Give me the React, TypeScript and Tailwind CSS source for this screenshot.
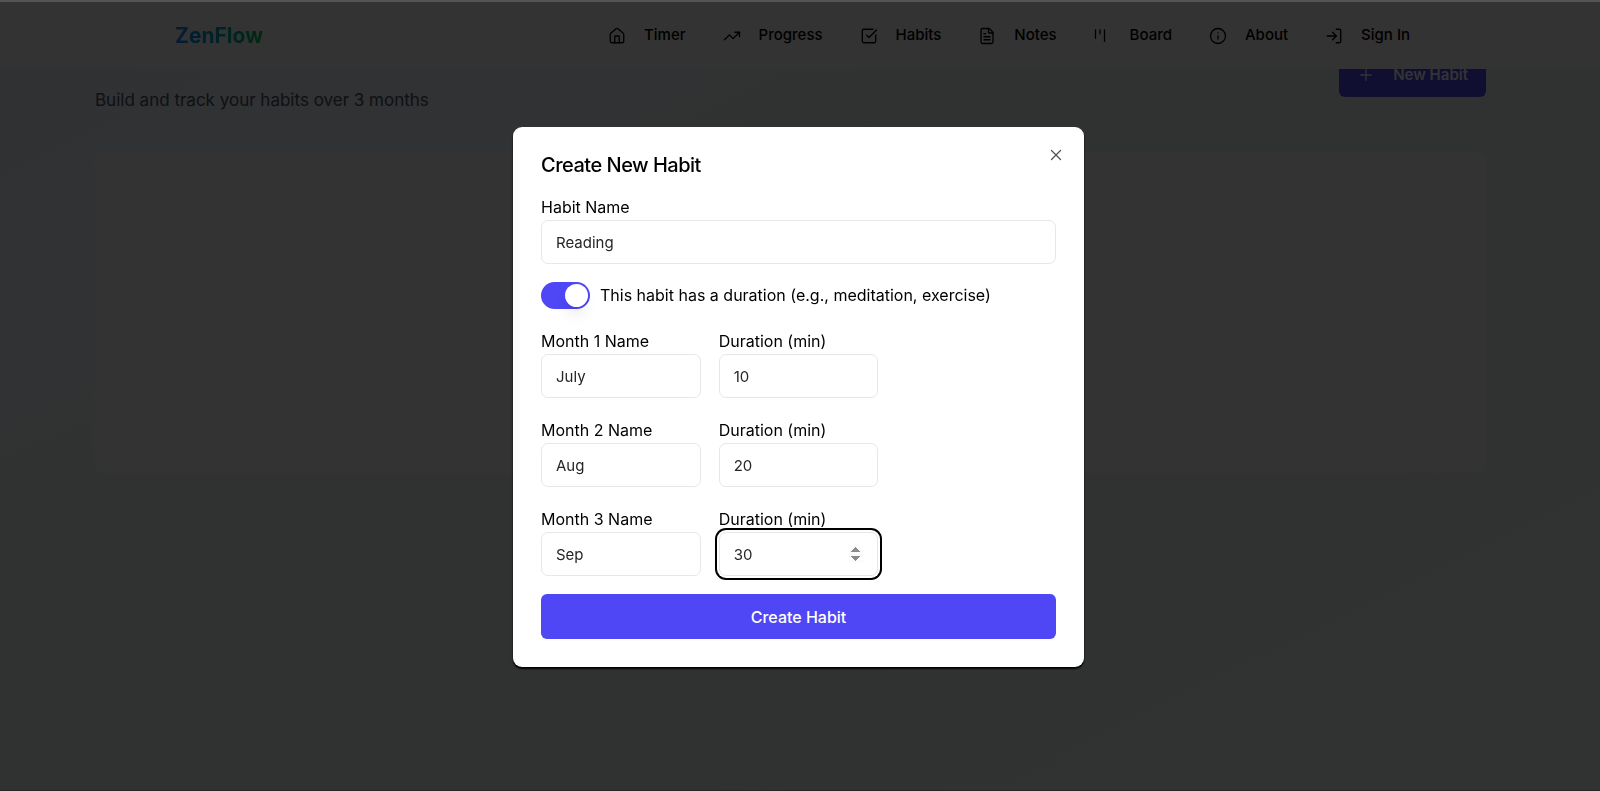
import React from "react";
import { House, TrendingUp, SquareCheckBig, FileText, Info, LogIn, Plus, X } from "lucide-react";

function BoardIcon({ className }: { className?: string }) {
  return (
    <svg viewBox="0 0 24 24" fill="none" stroke="currentColor" strokeWidth="1.75" strokeLinecap="round" className={className} aria-hidden="true">
      <path d="M2 4v11M8 4v5M14 4v15" />
    </svg>
  );
}

const links = [
  { label: "Timer", Icon: House },
  { label: "Progress", Icon: TrendingUp },
  { label: "Habits", Icon: SquareCheckBig },
  { label: "Notes", Icon: FileText },
  { label: "Board", Icon: BoardIcon },
  { label: "About", Icon: Info },
  { label: "Sign In", Icon: LogIn },
];

const months = [
  { name: "July", minutes: 10 },
  { name: "Aug", minutes: 20 },
  { name: "Sep", minutes: 30 },
];

const inputClass =
  "block h-11 w-full rounded-[7px] border border-gray-200 bg-white px-3.5 text-[15px] text-neutral-800 outline-none";
const labelClass = "block text-base leading-[25px] text-black";

function Header() {
  return (
    <header className="sticky top-0 z-10 bg-white">
      <div className="flex h-[69px] items-center justify-between pt-0.5 pr-[190px] pl-[175px]">
        <a href="#home" className="bg-linear-to-r from-blue-500 to-green-500 bg-clip-text text-[21px] font-bold text-transparent">
          ZenFlow
        </a>
        <nav className="flex items-center gap-[37px]">
          {links.map(({ label, Icon }) => (
            <a key={label} href={"#" + label} className="flex items-center gap-[18px] text-[15px] font-medium text-black">
              <Icon className="size-[18px]" strokeWidth={1.75} />
              {label}
            </a>
          ))}
        </nav>
      </div>
    </header>
  );
}

function HabitDialog() {
  return (
    <div role="dialog" aria-labelledby="dialog-title" className="relative w-full max-w-[571px] rounded-[9px] bg-white p-7 shadow-[0_2px_2px_#000]">
      <h2 id="dialog-title" className="text-xl leading-5 font-medium tracking-tight text-black">Create New Habit</h2>
      <button aria-label="Close" className="absolute top-[19px] right-[19px] text-neutral-600">
        <X className="size-[18px]" strokeWidth={1.75} />
      </button>
      <form className="mt-5" onSubmit={(e) => e.preventDefault()}>
        <label htmlFor="habit" className={labelClass}>Habit Name</label>
        <input id="habit" defaultValue="Reading" className={inputClass} />
        <label className="mt-[18px] flex items-center gap-2.5 text-base leading-[27px] text-black">
          <input
            type="checkbox"
            role="switch"
            defaultChecked
            className="h-[27px] w-[49px] appearance-none rounded-full bg-gray-200 p-0.5 before:block before:size-[23px] before:rounded-full before:bg-white before:shadow-lg checked:bg-[#4f46f5] checked:before:ml-[22px]"
          />
          This habit has a duration (e.g., meditation, exercise)
        </label>
        <div className="mt-5 flex flex-col gap-5">
          {months.map((m, i) => (
            <div key={m.name} className="grid grid-cols-3 gap-[18px]">
              <div>
                <label htmlFor={"month" + i} className={labelClass}>Month {i + 1} Name</label>
                <input id={"month" + i} defaultValue={m.name} className={inputClass} />
              </div>
              <div>
                <label htmlFor={"minutes" + i} className={labelClass}>Duration (min)</label>
                <input
                  id={"minutes" + i}
                  type="number"
                  defaultValue={m.minutes}
                  autoFocus={i === 2}
                  className={inputClass + " focus:ring-2 focus:ring-black focus:ring-offset-2"}
                />
              </div>
            </div>
          ))}
        </div>
        <button type="submit" className="mt-[18px] h-[45px] w-full rounded-md bg-[#4f46f5] text-base font-medium text-white">
          Create Habit
        </button>
      </form>
    </div>
  );
}

export default function App() {
  return (
    <div className="h-screen overflow-hidden bg-linear-to-br from-blue-50 to-green-50 font-['Inter',sans-serif]">
      <Header />
      <main className="pr-[114px] pl-[95px]">
        <div className="-mt-4 flex items-start justify-between">
          <p className="pt-[33px] text-[17px] leading-7 text-gray-600">Build and track your habits over 3 months</p>
          <button className="flex h-11 items-center gap-[18px] rounded-md bg-[#4f46f5] px-[18px] text-[15px] font-semibold text-white">
            <Plus className="size-[18px]" strokeWidth={1.75} />
            New Habit
          </button>
        </div>
        <section className="mt-[38px] h-[321px] rounded-lg bg-white" />
      </main>
      <div className="fixed inset-0 z-20 flex items-center justify-center border-t-2 border-b border-t-[#555555] border-b-[#2a2426] bg-black/80 pt-0.5 pr-[3px]">
        <HabitDialog />
      </div>
    </div>
  );
}
